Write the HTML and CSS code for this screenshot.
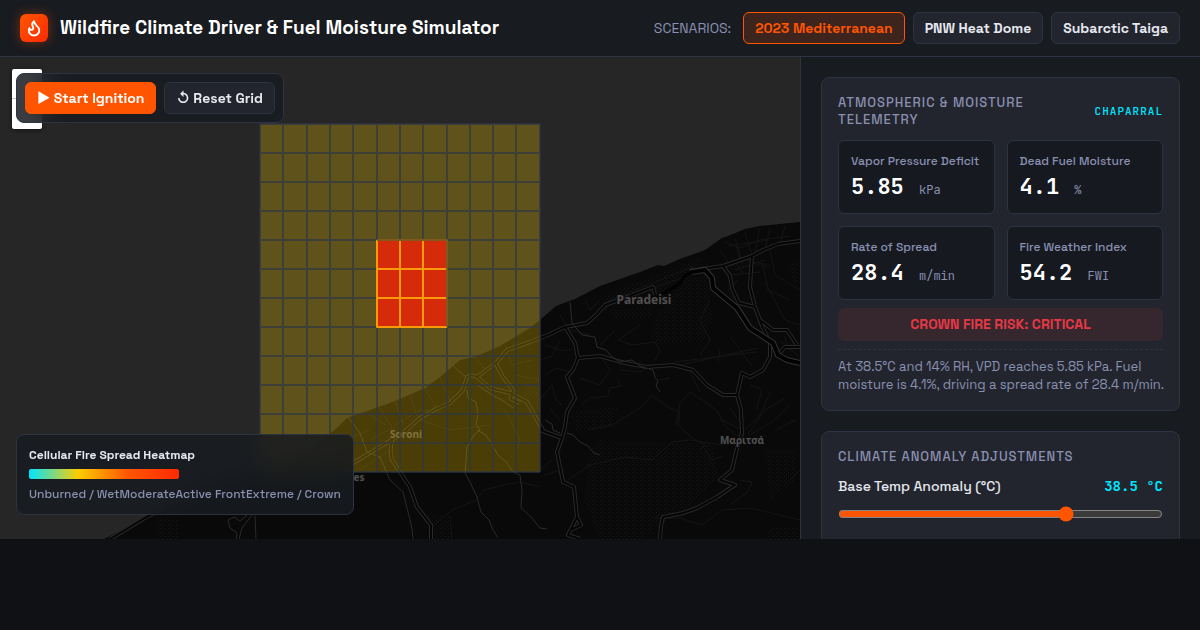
FILE: index.html
```html
<!DOCTYPE html>
<html lang="en">
<head>
<meta charset="utf-8">
<meta name="viewport" content="width=device-width, initial-scale=1">
<title>Wildfire Climate Driver &amp; Fuel Moisture Simulator</title>
<link rel="stylesheet" href="styles.css">
</head>
<body>
<header class="topbar">
  <div class="brand">
    <span class="logo">
      <svg width="18" height="18" viewBox="0 0 24 24" fill="none" stroke="currentColor" stroke-width="2.5" stroke-linecap="round" stroke-linejoin="round" aria-hidden="true"><path d="M8.5 14.5A2.5 2.5 0 0 0 11 12c0-1.38-.5-2-1-3-1.072-2.143-.224-4.054 2-6 .5 2.5 2 4.9 4 6.5 2 1.6 3 3.5 3 5.5a7 7 0 1 1-14 0c0-1.153.433-2.294 1-3a2.5 2.5 0 0 0 2.5 2.5z"/></svg>
    </span>
    <h1>Wildfire Climate Driver &amp; Fuel Moisture Simulator</h1>
  </div>
  <nav class="scenarios" aria-label="Scenarios">
    <span class="scenarios-label">SCENARIOS:</span>
    <button type="button" class="btn active">2023 Mediterranean</button>
    <button type="button" class="btn">PNW Heat Dome</button>
    <button type="button" class="btn">Subarctic Taiga</button>
  </nav>
</header>

<main class="workspace">
  <section class="map" aria-label="Fire spread map">
    <svg class="map-canvas" viewBox="0 57 800 482" preserveAspectRatio="xMidYMid slice">
      <defs>
        <pattern id="forest" width="4" height="4" patternUnits="userSpaceOnUse">
          <rect x="0" y="0" width="1" height="1" fill="#171717"/>
          <rect x="2" y="2" width="1" height="1" fill="#171717"/>
        </pattern>
        <g id="main-roads">
          <path d="M800 241L778 244L763 250L752 256L738 261L723 266L702 269L692 272L685 276L680 283L673 288L662 294"/>
          <path d="M655 294L653 287L630 296L605 305L596 315L587 323L565 327L548 335L530 342L507 350L497 362L477 377Q471 374 467 377L463 390L450 403L436 409L420 418L403 433L353 463"/>
          <path d="M723 266L730 276L732 288L739 303L755 307L750 287L751 270L752 257"/>
          <path d="M755 307L760 320L773 330L787 330L797 345M778 355L785 347L800 347M755 307L762 326L770 343L770 357L763 370L750 377L742 373L737 395L723 395L707 385L693 370L673 365L647 367L625 363L600 356L578 358"/>
          <path d="M565 327L575 343L578 358L573 370L567 377L575 398L567 412L565 427L562 438L557 452L563 482L574 487L577 517L568 535L580 539M577 517L581 525L570 530"/>
          <path d="M737 395L741 410L742 433L737 448L732 470L720 480L735 485L717 497L697 508L683 513L663 517L661 526L660 539"/>
          <path d="M540 430L551 434L562 438M477 377L490 388L510 393L527 402L537 420L543 430M495 362L503 377L513 390L511 399L520 403"/>
          <path d="M393 437Q389 449 392 460L410 487L417 507L431 525L431 539"/>
          <path d="M110 539L125 530L143 519L160 510"/>
        </g>
        <g id="minor-roads">
          <path d="M570 302L572 323L582 335L595 337L597 347L606 350L612 357L620 362L632 360L640 366L653 370L655 377L658 381L656 386L660 392"/>
          <path d="M567 433L573 435L580 442L588 446L594 453L600 455"/>
          <path d="M348 417L360 433L367 452L380 457L390 480L403 492L407 508L410 520L412 529L413 539"/>
          <path d="M467 390L468 398L476 402L478 415L476 424L480 430L474 435L467 447L465 473L470 482L477 497L481 512L489 520L493 530L498 538"/>
          <path d="M477 430L486 435L492 445L498 455L507 463L513 472L520 475L522 490L521 508L532 518L540 528L547 529"/>
          <path d="M477 385L492 395L502 400L513 408M545 420L552 424L553 430L560 433"/>
          <path d="M247 515L240 521L234 517L228 520L230 528L237 533L236 539M252 515L242 528L239 539M255 516L256 539"/>
          <path d="M452 365L466 377"/>
        </g>
      </defs>

      <rect x="0" y="57" width="800" height="482" fill="#262626"/>
      <path id="land" fill="#090909" d="M104 539L118 532L138 521L155 514L200 490L260 470L310 450L338 427L347 418L370 410L395 401L425 388L440 377L460 360L475 357L500 346L530 328L540 320L556 306L575 299L600 286L620 279L640 272L658 265L664 266L680 259L705 250L722 238L728 236L745 229L760 226L780 224L800 222V539Z"/>

      <g fill="url(#forest)">
        <path d="M600 296L700 258L704 268L684 274L660 294L606 303Z"/>
        <path d="M685 278L707 276L712 320L704 340L650 342L655 318Z"/>
        <path d="M525 378L540 372V402L524 396ZM570 412L618 406L610 428L575 430Z"/>
        <path d="M600 440L712 444L718 478L690 505L640 540H600L584 500L590 450Z"/>
        <path d="M156 515L178 520V539H158ZM420 512L450 516L450 539H434ZM765 450H795V480L770 500ZM770 528H800V539H765Z"/>
        <path d="M610 310L655 306L650 318L615 318ZM788 262H800V288L792 280Z"/>
      </g>

      <g class="lanes">
        <path d="M560 315L570 330L590 335M600 300L590 310L585 300M540 360L552 356L560 340M545 375L556 368L570 372M540 400L552 385L556 400L562 405"/>
        <path d="M582 404L590 398L608 396L610 388L621 386L618 380M588 430L612 425L640 408L651 396L670 408L680 412L678 425L692 438L705 445L700 450M690 392L680 403L676 425M690 392L706 402L718 412L724 425L737 436"/>
        <path d="M565 482L590 465L625 457L652 460L672 442L690 440L722 445M705 450L712 460L722 456M655 518L680 518L702 525L722 510L750 508L800 520M730 505L748 492L752 482L740 480"/>
        <path d="M745 430L760 415L770 392M748 434L765 410L785 398M748 436L772 422L790 405M742 430L722 420M742 425L730 408M750 385L762 390L756 410M775 430L796 420M790 480L800 470"/>
        <path d="M615 330L600 345M640 325L618 340L632 345L655 342L660 350L655 360M710 300L700 320L710 340L700 355M675 362L756 352M680 365L758 348M730 337L752 366M720 350L718 362"/>
        <path d="M720 250L728 262M735 238L742 262M745 232L752 256M760 228L754 256M770 228L765 250M785 226L780 244M725 242L740 248L760 240L790 236M730 275L760 272M735 270L765 260M762 262L768 290L790 300M770 250L775 275L800 290M765 282L785 320L800 325M738 280L728 290L735 300"/>
        <path d="M736 246L744 268M738 256L766 268M732 258L744 274M756 262L770 266M780 340L798 356M784 336L790 350M788 348L796 340M728 246L768 240"/>
        <path d="M395 401L403 425M410 395L418 418M380 408L392 428L370 440M365 412L385 425M425 388L436 408M440 378L450 400M475 357L486 370M505 345L512 365L532 360M515 375L540 380M420 420L450 430L490 425M395 425L420 410L440 412M345 440L370 430M505 410L520 440L515 455M360 470L390 450"/>
        <path d="M434 525L452 510L476 500L484 490L504 485L520 482L540 487M450 516L452 539M540 470L552 460M545 475L560 470M600 355L610 370L600 385L580 378M610 300L695 266M605 305L690 275M605 310L610 300"/>
        <path d="M620 370L640 372L650 365M545 345L560 350L572 350M550 408L560 420M670 378L660 380M690 372L700 392"/>
      </g>

      <g class="road-edge"><use href="#main-roads"/></g>
      <g class="road-core"><use href="#main-roads"/></g>
      <path class="motorway-edge" d="M690 272L705 270L712 278L713 288L725 298L737 308L750 328L773 343L778 355L787 360L800 363"/>
      <path class="motorway-core" d="M662 294L673 288L680 283L685 276L692 272L705 270L712 278L713 288L725 298L737 308L750 328L773 343L778 355L787 360L800 363"/>
      <g class="minor"><use href="#minor-roads"/></g>

      <g class="places">
        <text x="644" y="304" font-size="12">Paradeisi</text>
        <text x="406" y="438" font-size="10">Soroni</text>
        <text x="742" y="444" font-size="10">Μαριτσά</text>
        <text x="359" y="481" font-size="10">es</text>
      </g>

      <g id="grid">
        <rect x="260" y="124" width="280" height="348" fill="#ffcc00" fill-opacity="0.27"/>
        <path class="grid-lines" d="M260 124H540M260 153H540M260 182H540M260 211H540M260 240H540M260 269H540M260 298H540M260 327H540M260 356H540M260 385H540M260 414H540M260 443H540M260 472H540M260 124V472M283 124V472M307 124V472M330 124V472M353 124V472M377 124V472M400 124V472M423 124V472M447 124V472M470 124V472M493 124V472M516 124V472M540 124V472"/>
        <rect x="377" y="240" width="70" height="87" fill="#d62b0a"/>
        <path class="fire-lines" d="M377 240V327H447M400 240V327M423 240V327M377 269H447M377 298H447"/>
        <path class="fire-rim" d="M377 240H447V327"/>
      </g>
    </svg>

    <div class="zoom-control" aria-hidden="true"><span></span><span></span></div>

    <div class="controls panel">
      <button type="button" class="btn primary">▶ Start Ignition</button>
      <button type="button" class="btn">↺ Reset Grid</button>
    </div>

    <div class="legend panel">
      <strong>Cellular Fire Spread Heatmap</strong>
      <div class="legend-bar"></div>
      <div class="legend-labels"><span>Unburned / Wet</span><span>Moderate</span><span>Active Front</span><span>Extreme / Crown</span></div>
    </div>
  </section>

  <aside class="sidebar">
    <section class="card">
      <h2><span>Atmospheric &amp; Moisture Telemetry</span><span class="biome">Chaparral</span></h2>
      <div class="metrics">
        <div class="metric"><div class="metric-label">Vapor Pressure Deficit</div><div class="metric-value">5.85 <span>kPa</span></div></div>
        <div class="metric"><div class="metric-label">Dead Fuel Moisture</div><div class="metric-value">4.1 <span>%</span></div></div>
        <div class="metric"><div class="metric-label">Rate of Spread</div><div class="metric-value">28.4 <span>m/min</span></div></div>
        <div class="metric"><div class="metric-label">Fire Weather Index</div><div class="metric-value">54.2 <span>FWI</span></div></div>
      </div>
      <div class="alert">CROWN FIRE RISK: CRITICAL</div>
      <p class="note">At 38.5°C and 14% RH, VPD reaches 5.85 kPa. Fuel<br>moisture is 4.1%, driving a spread rate of 28.4 m/min.</p>
    </section>
    <section class="card">
      <h2>Climate Anomaly Adjustments</h2>
      <div class="slider-head"><label for="temp">Base Temp Anomaly (°C)</label><output for="temp">38.5 °C</output></div>
      <input class="slider" id="temp" type="range" min="15" max="48" step="0.5" value="38.5">
    </section>
  </aside>
</main>
</body>
</html>
```
FILE: styles.css
```css
:root {
  --bg: #0f1115;
  --surface: #181b20;
  --raised: #22252e;
  --inset: #161920;
  --line: #2d3340;
  --text: #e6e8ef;
  --muted: #8a90b0;
  --orange: #ff5500;
  --cyan: #00e5ff;
  --sans: "Space Grotesk", Inter, "Liberation Sans", sans-serif;
  --mono: "JetBrains Mono", "Liberation Mono", monospace;
}

* { box-sizing: border-box; }

body {
  display: flex;
  flex-direction: column;
  height: 100vh;
  margin: 0;
  padding-bottom: 91px;
  overflow: hidden;
  background: var(--bg);
  color: var(--text);
  font-family: var(--sans);
  font-size: 13px;
}

h1, h2, p { margin: 0; }

.topbar {
  display: flex;
  flex: none;
  align-items: center;
  justify-content: space-between;
  padding: 12px 20px;
  background: var(--surface);
  border-bottom: 1px solid var(--line);
}

.brand, .scenarios { display: flex; align-items: center; }
.brand { gap: 12px; }
.scenarios { gap: 8px; }

.logo {
  display: flex;
  align-items: center;
  justify-content: center;
  width: 28px;
  height: 28px;
  border-radius: 6px;
  background: linear-gradient(135deg, #ff5500, #ff2a00);
  box-shadow: 0 0 12px rgba(255, 85, 0, 0.4);
  color: #fff;
}

h1 { color: #fff; font-size: 19px; font-weight: 700; line-height: 24px; }

.scenarios-label { margin-right: 4px; color: var(--muted); font-size: 14px; }

.btn {
  height: 32px;
  padding: 0 11px;
  border: 1px solid var(--line);
  border-radius: 6px;
  background: var(--raised);
  color: var(--text);
  font: 600 14px var(--sans);
  white-space: nowrap;
}
.btn.active { border-color: var(--orange); background: #3d241d; color: var(--orange); }
.btn.primary { border-color: var(--orange); background: var(--orange); color: #fff; }

.workspace {
  display: grid;
  flex: 1;
  grid-template-columns: 1fr 400px;
  min-height: 0;
}

.map { position: relative; min-height: 0; overflow: hidden; background: #262626; }
.map-canvas { display: block; width: 100%; height: 100%; }

.lanes, .minor, .road-edge, .road-core, .motorway-edge, .motorway-core,
.grid-lines, .fire-lines, .fire-rim { fill: none; stroke-linejoin: round; }
.lanes { stroke: #151515; stroke-width: 1; }
.minor { stroke: #2a2a2a; stroke-width: 1; }
.road-edge { stroke: #282828; stroke-width: 4; }
.road-core { stroke: #050505; stroke-width: 2; }
.motorway-edge { stroke: #333; stroke-width: 6; }
.motorway-core { stroke: #020202; stroke-width: 4; }
.grid-lines { stroke: #2d3748; stroke-opacity: 0.65; stroke-width: 2; }
.fire-lines { stroke: #f99a08; stroke-width: 2; }
.fire-rim { stroke: #80591f; stroke-width: 2; }

.places {
  fill: #505050;
  stroke: #0c0c0c;
  stroke-width: 2px;
  paint-order: stroke;
  font-family: "Noto Sans", sans-serif;
  font-weight: 700;
  text-anchor: middle;
}

.zoom-control {
  position: absolute;
  top: 12px;
  left: 12px;
  width: 30px;
  border-radius: 2px;
  overflow: hidden;
  background: #fff;
  box-shadow: 0 1px 4px rgba(0, 0, 0, 0.6);
}
.zoom-control span { display: block; height: 30px; }
.zoom-control span:first-child { border-bottom: 1px solid #ccc; }

.panel {
  position: absolute;
  left: 16px;
  border: 1px solid var(--line);
  border-radius: 8px;
  background: rgba(24, 27, 32, 0.85);
  backdrop-filter: blur(12px);
}
.controls { display: flex; top: 16px; gap: 8px; padding: 8px; }
.legend { bottom: 24px; padding: 12px; font-size: 12px; line-height: 16px; }
.legend strong { display: block; font-size: 12px; font-weight: 600; }
.legend-bar {
  width: 150px;
  height: 10px;
  margin: 6px 0 7px;
  border-radius: 2px;
  background: linear-gradient(90deg, #00e5ff, #ffcc00 33%, #ff5500 66%, #ff2a00);
}
.legend-labels { display: flex; justify-content: space-between; color: var(--muted); font-weight: 500; }

.sidebar {
  display: flex;
  flex-direction: column;
  gap: 20px;
  min-height: 0;
  padding: 20px;
  overflow: hidden;
  background: var(--surface);
  border-left: 1px solid var(--line);
}

.card {
  flex: none;
  padding: 16px;
  border: 1px solid var(--line);
  border-radius: 8px;
  background: var(--raised);
}

h2 {
  display: flex;
  align-items: center;
  justify-content: space-between;
  margin-bottom: 12px;
  color: var(--muted);
  font-size: 13px;
  font-weight: 500;
  letter-spacing: 1px;
  line-height: 17px;
  text-transform: uppercase;
}
.biome { color: var(--cyan); font-family: var(--mono); font-size: 11px; }

.metrics { display: grid; grid-template-columns: 1fr 1fr; gap: 12px; }
.metric {
  padding: 12px;
  border: 1px solid var(--line);
  border-radius: 6px;
  background: var(--inset);
}
.metric-label { color: var(--muted); font-size: 12px; font-weight: 500; line-height: 16px; white-space: nowrap; }
.metric-value { margin-top: 4px; color: #fff; font: 700 22px/28px var(--mono); }
.metric-value span { margin-left: 2px; color: var(--muted); font-size: 12px; font-weight: 400; line-height: 12px; }

.alert {
  margin-top: 8px;
  padding: 8px;
  border-radius: 6px;
  background: #36262e;
  color: #e63946;
  font-size: 14px;
  font-weight: 700;
  line-height: 17px;
  text-align: center;
}

.note {
  margin-top: 8px;
  padding-top: 8px;
  border-top: 1px dashed var(--line);
  color: var(--muted);
  line-height: 18px;
  white-space: nowrap;
}

.slider-head { display: flex; align-items: center; justify-content: space-between; line-height: 18px; }
.slider-head label { font-size: 14px; font-weight: 500; }
.slider-head output { color: var(--cyan); font: 700 14px/18px var(--mono); }
.slider { display: block; width: 100%; margin: 11px 0; accent-color: var(--orange); }
```
